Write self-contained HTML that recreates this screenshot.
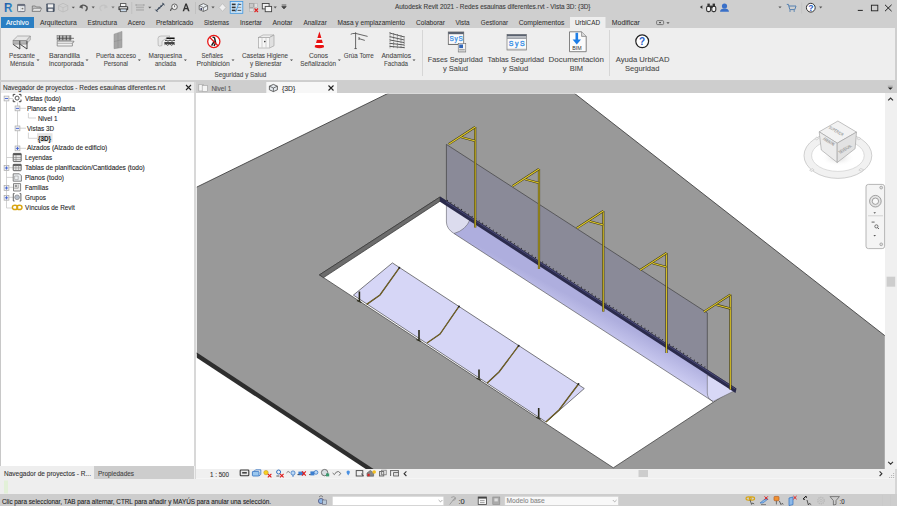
<!DOCTYPE html>
<html><head><meta charset="utf-8"><style>
html,body{margin:0;padding:0;width:897px;height:506px;overflow:hidden;background:#cfcfcf}
svg{display:block;font-family:"Liberation Sans",sans-serif}
</style></head><body>
<svg width="897" height="506" viewBox="0 0 897 506"><rect x="0" y="0" width="897" height="28" fill="#cfcfcf"/><rect x="0" y="28" width="897" height="53" fill="#eeeeee"/><rect x="0" y="28" width="1" height="53" fill="#c6c6c6"/><rect x="895" y="28" width="2" height="53" fill="#cfcfcf"/><rect x="0" y="80" width="897" height="2" fill="#cfcfcf"/><rect x="0" y="82" width="195" height="397" fill="#ffffff"/><rect x="0" y="82" width="1" height="397" fill="#c8c8c8"/><rect x="1" y="82" width="193" height="11" fill="#ececec"/><rect x="194" y="82" width="2" height="397" fill="#d8d8d8"/><rect x="0" y="466" width="195" height="13" fill="#eeeeee"/><rect x="94" y="466" width="100" height="13" fill="#cdcdcd"/><rect x="196" y="81" width="701" height="12" fill="#cecece"/><rect x="196" y="93" width="689" height="376" fill="#ffffff"/><rect x="885" y="93" width="12" height="376" fill="#f0f0f0"/><rect x="196" y="469" width="701" height="10" fill="#f0f0f0"/><rect x="196" y="478.5" width="701" height="1" fill="#fafafa"/><rect x="0" y="479" width="897" height="15" fill="#eeeeee"/><rect x="895" y="469" width="2" height="25" fill="#d6d6d6"/><rect x="0" y="494" width="897" height="12" fill="#cdcdcd"/><text x="395" y="8.7" font-size="7" fill="#3c3c3c" stroke="#3c3c3c" stroke-width="0.1" textLength="195.5" lengthAdjust="spacingAndGlyphs">Autodesk Revit 2021 - Redes esauinas diferentes.rvt - Vista 3D: {3D}</text><rect x="1" y="17" width="33" height="11" fill="#2b7fc3"/><text x="6" y="24.7" font-size="7" fill="#ffffff" stroke="#ffffff" stroke-width="0.1" textLength="22.8" lengthAdjust="spacingAndGlyphs">Archivo</text><rect x="570" y="17" width="35.5" height="11" fill="#eeeeee"/><text x="40" y="24.7" font-size="7" fill="#333333" stroke="#333333" stroke-width="0.06" textLength="36.8" lengthAdjust="spacingAndGlyphs">Arquitectura</text><text x="87.6" y="24.7" font-size="7" fill="#333333" stroke="#333333" stroke-width="0.06" textLength="29.4" lengthAdjust="spacingAndGlyphs">Estructura</text><text x="127.8" y="24.7" font-size="7" fill="#333333" stroke="#333333" stroke-width="0.06" textLength="17" lengthAdjust="spacingAndGlyphs">Acero</text><text x="155.9" y="24.7" font-size="7" fill="#333333" stroke="#333333" stroke-width="0.06" textLength="37.4" lengthAdjust="spacingAndGlyphs">Prefabricado</text><text x="204" y="24.7" font-size="7" fill="#333333" stroke="#333333" stroke-width="0.06" textLength="25" lengthAdjust="spacingAndGlyphs">Sistemas</text><text x="240" y="24.7" font-size="7" fill="#333333" stroke="#333333" stroke-width="0.06" textLength="22" lengthAdjust="spacingAndGlyphs">Insertar</text><text x="272.6" y="24.7" font-size="7" fill="#333333" stroke="#333333" stroke-width="0.06" textLength="20" lengthAdjust="spacingAndGlyphs">Anotar</text><text x="303.4" y="24.7" font-size="7" fill="#333333" stroke="#333333" stroke-width="0.06" textLength="23.4" lengthAdjust="spacingAndGlyphs">Analizar</text><text x="337.5" y="24.7" font-size="7" fill="#333333" stroke="#333333" stroke-width="0.06" textLength="67.5" lengthAdjust="spacingAndGlyphs">Masa y emplazamiento</text><text x="416" y="24.7" font-size="7" fill="#333333" stroke="#333333" stroke-width="0.06" textLength="29" lengthAdjust="spacingAndGlyphs">Colaborar</text><text x="455.5" y="24.7" font-size="7" fill="#333333" stroke="#333333" stroke-width="0.06" textLength="14" lengthAdjust="spacingAndGlyphs">Vista</text><text x="480.8" y="24.7" font-size="7" fill="#333333" stroke="#333333" stroke-width="0.06" textLength="27.2" lengthAdjust="spacingAndGlyphs">Gestionar</text><text x="518.7" y="24.7" font-size="7" fill="#333333" stroke="#333333" stroke-width="0.06" textLength="45.7" lengthAdjust="spacingAndGlyphs">Complementos</text><text x="575" y="24.7" font-size="7" fill="#333333" stroke="#333333" stroke-width="0.06" textLength="25" lengthAdjust="spacingAndGlyphs">UrbiCAD</text><text x="611.8" y="24.7" font-size="7" fill="#333333" stroke="#333333" stroke-width="0.06" textLength="28" lengthAdjust="spacingAndGlyphs">Modificar</text><text x="9" y="57.5" font-size="6.8" fill="#484848" stroke="#484848" stroke-width="0.08" textLength="26" lengthAdjust="spacingAndGlyphs">Pescante</text><text x="10" y="65.6" font-size="6.8" fill="#484848" stroke="#484848" stroke-width="0.08" textLength="24" lengthAdjust="spacingAndGlyphs">Ménsula</text><text x="49" y="57.5" font-size="6.8" fill="#484848" stroke="#484848" stroke-width="0.08" textLength="31" lengthAdjust="spacingAndGlyphs">Barandilla</text><text x="49" y="65.6" font-size="6.8" fill="#484848" stroke="#484848" stroke-width="0.08" textLength="35" lengthAdjust="spacingAndGlyphs">incorporada</text><text x="96" y="57.5" font-size="6.8" fill="#484848" stroke="#484848" stroke-width="0.08" textLength="40" lengthAdjust="spacingAndGlyphs">Puerta acceso</text><text x="103.7" y="65.6" font-size="6.8" fill="#484848" stroke="#484848" stroke-width="0.08" textLength="24.3" lengthAdjust="spacingAndGlyphs">Personal</text><text x="148.6" y="57.5" font-size="6.8" fill="#484848" stroke="#484848" stroke-width="0.08" textLength="33.4" lengthAdjust="spacingAndGlyphs">Marquesina</text><text x="155" y="65.6" font-size="6.8" fill="#484848" stroke="#484848" stroke-width="0.08" textLength="21" lengthAdjust="spacingAndGlyphs">anclada</text><text x="201.6" y="57.5" font-size="6.8" fill="#484848" stroke="#484848" stroke-width="0.08" textLength="21.4" lengthAdjust="spacingAndGlyphs">Señales</text><text x="196.4" y="65.6" font-size="6.8" fill="#484848" stroke="#484848" stroke-width="0.08" textLength="33.5" lengthAdjust="spacingAndGlyphs">Prohibición</text><text x="242" y="57.5" font-size="6.8" fill="#484848" stroke="#484848" stroke-width="0.08" textLength="46" lengthAdjust="spacingAndGlyphs">Casetas Higiene</text><text x="250" y="65.6" font-size="6.8" fill="#484848" stroke="#484848" stroke-width="0.08" textLength="31.7" lengthAdjust="spacingAndGlyphs">y Bienestar</text><text x="309" y="57.5" font-size="6.8" fill="#484848" stroke="#484848" stroke-width="0.08" textLength="19" lengthAdjust="spacingAndGlyphs">Conos</text><text x="300.3" y="65.6" font-size="6.8" fill="#484848" stroke="#484848" stroke-width="0.08" textLength="35.7" lengthAdjust="spacingAndGlyphs">Señalización</text><text x="343.8" y="57.5" font-size="6.8" fill="#484848" stroke="#484848" stroke-width="0.08" textLength="29.9" lengthAdjust="spacingAndGlyphs">Grúa Torre</text><text x="381.4" y="57.5" font-size="6.8" fill="#484848" stroke="#484848" stroke-width="0.08" textLength="29.6" lengthAdjust="spacingAndGlyphs">Andamios</text><text x="384" y="65.6" font-size="6.8" fill="#484848" stroke="#484848" stroke-width="0.08" textLength="24" lengthAdjust="spacingAndGlyphs">Fachada</text><text x="214.5" y="76.8" font-size="6.8" fill="#484848" stroke="#484848" stroke-width="0.08" textLength="51.8" lengthAdjust="spacingAndGlyphs">Seguridad y Salud</text><path d="M36.5 59.5h3l-1.5 1.6z" fill="#444"/><path d="M85.5 59.5h3l-1.5 1.6z" fill="#444"/><path d="M137.8 59.5h3l-1.5 1.6z" fill="#444"/><path d="M183.9 59.5h3l-1.5 1.6z" fill="#444"/><path d="M231.5 59.5h3l-1.5 1.6z" fill="#444"/><path d="M290.0 59.5h3l-1.5 1.6z" fill="#444"/><path d="M337.8 59.5h3l-1.5 1.6z" fill="#444"/><path d="M412.5 59.5h3l-1.5 1.6z" fill="#444"/><text x="427.8" y="61.8" font-size="8" fill="#484848" stroke="#484848" stroke-width="0.08" textLength="55" lengthAdjust="spacingAndGlyphs">Fases Seguridad</text><text x="442.9" y="71.4" font-size="8" fill="#484848" stroke="#484848" stroke-width="0.08" textLength="25" lengthAdjust="spacingAndGlyphs">y Salud</text><text x="487.6" y="61.8" font-size="8" fill="#484848" stroke="#484848" stroke-width="0.08" textLength="56.6" lengthAdjust="spacingAndGlyphs">Tablas Seguridad</text><text x="502.7" y="71.4" font-size="8" fill="#484848" stroke="#484848" stroke-width="0.08" textLength="25.5" lengthAdjust="spacingAndGlyphs">y Salud</text><text x="548.6" y="61.8" font-size="8" fill="#484848" stroke="#484848" stroke-width="0.08" textLength="55.4" lengthAdjust="spacingAndGlyphs">Documentación</text><text x="569.7" y="71.4" font-size="8" fill="#484848" stroke="#484848" stroke-width="0.08" textLength="13.3" lengthAdjust="spacingAndGlyphs">BIM</text><text x="615.7" y="61.8" font-size="8" fill="#484848" stroke="#484848" stroke-width="0.08" textLength="53.8" lengthAdjust="spacingAndGlyphs">Ayuda UrbiCAD</text><text x="625" y="71.4" font-size="8" fill="#484848" stroke="#484848" stroke-width="0.08" textLength="34.4" lengthAdjust="spacingAndGlyphs">Seguridad</text><rect x="422" y="30" width="1" height="46" fill="#d6d6d6"/><rect x="609" y="30" width="1" height="46" fill="#d6d6d6"/><defs><linearGradient id="rg" x1="0" y1="0" x2="1" y2="1"><stop offset="0" stop-color="#1b4f9c"/><stop offset="1" stop-color="#3aa0e0"/></linearGradient></defs><text x="4" y="12" font-size="12.4" font-weight="bold" fill="url(#rg)" textLength="8.4" lengthAdjust="spacingAndGlyphs">R</text><rect x="17.5" y="4.4" width="7.4" height="7.2" rx="0.8" fill="#d8dce0" stroke="#5a6070" stroke-width="0.8"/><rect x="17.5" y="4.4" width="7.4" height="1.4" fill="#5a6070"/><rect x="18.8" y="6.6" width="1.4" height="4.2" fill="#f4f4f4"/><rect x="21" y="7" width="3.2" height="3.8" fill="#f4f4f4"/><rect x="21.6" y="7.8" width="1.8" height="1.6" fill="#777"/><path d="M32.3 6 h3 l1 1 h4 v4.3 h-8 z" fill="#c8c8c8" stroke="#666" stroke-width="0.7"/><path d="M33.5 8.3 h8.2 l-1.6 3 h-8 z" fill="#e4e4e4" stroke="#777" stroke-width="0.7"/><rect x="46.3" y="3.5" width="8.4" height="8.4" rx="0.8" fill="#4a5566"/><rect x="47.8" y="4.3" width="5.4" height="3.2" fill="#f2f2f2"/><rect x="48.2" y="8.7" width="4.6" height="2.6" fill="#e8e8e8"/><path d="M63 3.3 L67.8 5.6 V10 L63 12 L58.6 10 V5.6 Z" fill="#cfcfcf" stroke="#b4b4b4" stroke-width="0.6"/><path d="M58.6 5.6 L63 7.7 L67.8 5.6 M63 7.7 V12" stroke="#bbb" stroke-width="0.6" fill="none"/><path d="M71.7 6.8h3.2l-1.6 1.8z" fill="#555"/><path d="M80 6.5 Q84 3.5 87 7 Q87.6 9.5 85.5 10.8" stroke="#555" stroke-width="1.4" fill="none"/><path d="M79 7.2 L82.5 4.2 L82.8 8.8 Z" fill="#555"/><path d="M91.60000000000001 6.6000000000000005h3.2l-1.6 1.8z" fill="#555"/><path d="M107 6.5 Q103 3.5 100 7 Q99.4 9.5 101.5 10.8" stroke="#c4c4c4" stroke-width="1.2" fill="none"/><path d="M108 7.2 L104.5 4.2 L104.2 8.8 Z" fill="#c4c4c4"/><path d="M111.4 6.6000000000000005h3.2l-1.6 1.8z" fill="#777"/><rect x="120.5" y="3.6" width="5.4" height="3" fill="#f4f4f4" stroke="#444" stroke-width="0.8"/><rect x="118.4" y="6.3" width="9.8" height="4" rx="0.8" fill="#444"/><rect x="120.3" y="9" width="6" height="2.7" fill="#cde" stroke="#444" stroke-width="0.7"/><rect x="119.6" y="7.2" width="7.4" height="1.2" fill="#eee"/><rect x="131.4" y="2" width="0.8" height="12" fill="#bdbdbd"/><rect x="136" y="6.6" width="8" height="1.6" fill="#b0b0b0"/><rect x="136" y="9.2" width="8" height="1.5" fill="#b0b0b0"/><path d="M136 5 h8 M136 4 v2 M144 4 v2" stroke="#9a9a9a" stroke-width="0.7"/><path d="M148.20000000000002 6.8h3.2l-1.6 1.8z" fill="#555"/><path d="M156 11 L164 3.6" stroke="#3c4a5c" stroke-width="1.1"/><path d="M155.4 9.6 L157.6 11.8 M162.2 3 L164.6 5.1 M158.6 7.3 l1.2 1.2 M160.6 5.5 l1.2 1.2" stroke="#3c4a5c" stroke-width="1"/><circle cx="174.5" cy="6.8" r="2.8" fill="#f2f2f2" stroke="#555" stroke-width="0.9"/><path d="M174.6 5.3 V7.2" stroke="#444" stroke-width="0.8"/><path d="M170.5 11 Q171 8 172.7 8.6" stroke="#555" stroke-width="1.2" fill="none"/><path d="M182.6 11.3 L185.4 3.6 H186.8 L189.6 11.3 H188 L187.3 9.2 H184.8 L184.1 11.3 Z M185.2 7.9 H186.9 L186.05 5.2 Z" fill="#333" fill-rule="evenodd"/><rect x="195" y="2" width="0.8" height="12" fill="#bdbdbd"/><path d="M203.4 3.6 L207.6 5.6 V9.6 L203.4 11.4 L199.2 9.6 V5.6 Z" fill="#e9eef3" stroke="#555" stroke-width="0.8"/><path d="M199.2 5.6 L203.4 7.6 L207.6 5.6 M203.4 7.6 V11.4" stroke="#555" stroke-width="0.7" fill="none"/><rect x="200.5" y="8" width="1.6" height="2" fill="#446"/><path d="M211.4 6.6000000000000005h3.2l-1.6 1.8z" fill="#555"/><path d="M222.5 3.6 L226 7.5 L222.5 11.4 L219 7.5 Z" fill="#f0f0f0" stroke="#b8b8b8" stroke-width="0.8"/><rect x="230.2" y="1.5" width="12.6" height="11.8" fill="#cce4f7" stroke="#3d95e0" stroke-width="0.8"/><rect x="231.8" y="3.6" width="3.8" height="1.6" fill="#333"/><rect x="231.8" y="6.6" width="3.8" height="1.6" fill="#333"/><rect x="231.8" y="9.6" width="3.8" height="1.6" fill="#333"/><rect x="237.6" y="3.9" width="3.6" height="1" fill="#555"/><rect x="237.6" y="6.9" width="3.6" height="1" fill="#999"/><rect x="237.6" y="9.9" width="3.6" height="1" fill="#555"/><path d="M239 3 L235.6 12" stroke="#3d95e0" stroke-width="0.9"/><rect x="249.4" y="3.4" width="4.2" height="4.2" fill="#c8c8c8" stroke="#888" stroke-width="0.5"/><rect x="254.3" y="3.4" width="3.4" height="4.2" fill="#e0e0e0" stroke="#aaa" stroke-width="0.5"/><rect x="249.4" y="8.3" width="4.2" height="3.4" fill="#e0e0e0" stroke="#aaa" stroke-width="0.5"/><path d="M254.5 8.5 L258 12 M258 8.5 L254.5 12" stroke="#e02020" stroke-width="1.1"/><rect x="262.3" y="3.5" width="6.8" height="5.4" fill="#f0f0f0" stroke="#444" stroke-width="0.9"/><rect x="265.2" y="6.4" width="6.4" height="5.3" fill="#f6f6f6" stroke="#444" stroke-width="0.9"/><path d="M273.59999999999997 6.6000000000000005h3.2l-1.6 1.8z" fill="#555"/><path d="M281.7 5 h4.6 M281.8 6.6 h4.4 l-2.2 2.3 z" stroke="#444" stroke-width="0.8" fill="#444"/><path d="M702.4 5.2 V9 L699.9 7.1 Z" fill="#333"/><rect x="706.6" y="6.2" width="4" height="5.4" rx="1.6" fill="#f4f4f4" stroke="#333" stroke-width="1.1"/><rect x="711.8" y="6.2" width="4" height="5.4" rx="1.6" fill="#f4f4f4" stroke="#333" stroke-width="1.1"/><rect x="707.4" y="3.6" width="2.4" height="3.4" fill="#333"/><rect x="712.6" y="3.6" width="2.4" height="3.4" fill="#333"/><rect x="709.8" y="5.6" width="2.8" height="2.4" fill="#333"/><circle cx="724.5" cy="6" r="2.6" fill="#3a70c8"/><path d="M720 11.7 Q720.4 8.6 724.5 8.6 Q728.6 8.6 729 11.7 Z" fill="#3a70c8"/><path d="M778.4 6.5h3.2l-1.6 1.8z" fill="#555"/><path d="M786.8 4.4 h1.6 l1.4 5.2 h5 l1.2 -3.6 h-7" stroke="#5580b0" stroke-width="1" fill="none"/><circle cx="790" cy="11" r="0.8" fill="#5580b0"/><circle cx="794.2" cy="11" r="0.8" fill="#5580b0"/><rect x="801.4" y="2.5" width="0.7" height="11" fill="#c0c0c0"/><circle cx="810.8" cy="7.7" r="4.4" fill="#fff" stroke="#333" stroke-width="1"/><text x="808.2" y="10.9" font-size="8.6" font-weight="bold" fill="#2a5cc0">?</text><path d="M819.1 6.6000000000000005h3.2l-1.6 1.8z" fill="#555"/><path d="M857.8 10.4 h5" stroke="#222" stroke-width="1"/><rect x="871.4" y="5.2" width="6.4" height="5.6" fill="none" stroke="#222" stroke-width="0.9"/><path d="M885 4.8 L891.6 11.2 M891.6 4.8 L885 11.2" stroke="#222" stroke-width="1"/><rect x="656.6" y="20.6" width="7" height="4" rx="1" fill="none" stroke="#555" stroke-width="0.7"/><rect x="659" y="22" width="2" height="1.2" fill="#555"/><path d="M666.4 22.2h3.2l-1.6 1.8z" fill="#555"/><path d="M13 40.5 L17.6 36 H30.4 L26.4 40.5 Z" fill="#e6e6e6" stroke="#8a8a8a" stroke-width="0.6"/><rect x="13" y="40.5" width="13.4" height="3.6" fill="#b4b4b4" stroke="#777" stroke-width="0.5"/><path d="M26.4 40.5 L30.4 36 V39.8 L26.4 44.1 Z" fill="#d0d0d0" stroke="#888" stroke-width="0.5"/><path d="M13.2 44.4 L19.8 49 V40.8 M20.4 44.4 L27 49 V40.8" stroke="#333" stroke-width="0.9" fill="none"/><rect x="57" y="35.6" width="14" height="4.6" fill="#b8b8b8" stroke="#666" stroke-width="0.5"/><path d="M59.5 35.6 v4.6 M62.8 35.6 v4.6 M66.3 35.6 v4.6 M70 35.6 v4.6" stroke="#444" stroke-width="0.9"/><path d="M57 38.3 h17" stroke="#444" stroke-width="0.7"/><path d="M57.2 41.2 H74 L72.4 43.4 V46 H57.2 Z" fill="#f0f0f0" stroke="#777" stroke-width="0.7"/><path d="M57.2 43.3 H72.4 L74 41.2" stroke="#888" stroke-width="0.6" fill="none"/><path d="M114 34.2 L122 31.4 V47.5 L114 48.7 Z" fill="#a6a6a6" stroke="#8c8c8c" stroke-width="0.5"/><path d="M114 41.6 L122 39.6 M118 33 V48" stroke="#8a8a8a" stroke-width="0.5"/><path d="M158 38.5 Q158 36 161 36 H170 Q169 37.6 166 38.3 L162 41.3 V45.6 Q159 46.6 158.2 45.4 Z" fill="#e8e8e8" stroke="#a0a0a0" stroke-width="0.6"/><path d="M166.4 38.2 H174.6 M164.4 43 H174.6" stroke="#111" stroke-width="1.5"/><path d="M165 40.6 q1 -1.2 2 0 t2 0 t2 0 t2 0 t2 0 M164.6 44.6 q1 -1.2 2 0 t2 0 t2 0 t2 0 t2 0" stroke="#222" stroke-width="0.9" fill="none"/><circle cx="213.8" cy="41.5" r="6.1" fill="#fff" stroke="#e81818" stroke-width="1.3"/><path d="M212.5 37.4 Q214.4 36.8 214.8 38.8 L215.6 42.8 L214 46 M214.4 41 L211.6 45.6" stroke="#222" stroke-width="1.5" fill="none"/><path d="M209.6 37.3 L218 45.7" stroke="#e81818" stroke-width="1.3"/><path d="M258.6 37.4 L263 35 H274 L269.6 37.4 Z" fill="#f4f4f4" stroke="#999" stroke-width="0.6"/><rect x="258.6" y="37.4" width="11" height="10.6" fill="#f6f6f6" stroke="#999" stroke-width="0.6"/><path d="M269.6 37.4 L274 35 V45.8 L269.6 48" fill="#e0e0e0" stroke="#999" stroke-width="0.6"/><path d="M262 38 V47.5 M266 38 V47.5" stroke="#aaa" stroke-width="0.5"/><circle cx="264.8" cy="41.6" r="0.8" fill="#333"/><path d="M319.4 31.6 L317.4 38 H321.4 Z" fill="#e81212"/><path d="M317 39.4 L316 43 H322.8 L321.8 39.4 Z" fill="#e81212"/><path d="M317.4 38 L317 39.4 H321.8 L321.4 38 Z" fill="#fff"/><path d="M316 43 L315.5 45 H323.3 L322.8 43 Z" fill="#fff"/><path d="M315.6 45 Q314.6 45.6 314.8 47.2 Q319.4 49.4 324 47.2 Q324.2 45.6 323.2 45 Z" fill="#e81212"/><path d="M355.6 32.3 V48.7 M350.7 34.3 Q352 33.3 355.6 33.4 L367.6 36.4 M359 37 V40 M359 38.6 L364.8 40.4" stroke="#444" stroke-width="0.8" fill="none"/><path d="M354.4 48.6 h2.4" stroke="#444" stroke-width="0.8"/><path d="M389.6 33 L404.4 37 M389.6 36.6 L404.4 40 M389.6 40 L404.4 42.6 M389.6 43.3 L404.4 45 M389.6 46.4 L404.4 47.6" stroke="#333" stroke-width="0.8"/><path d="M390 32 V48.3 M393.6 33 V48.3 M397.4 34 V48.3 M401 35 V48.3 M404.2 36 V48.3" stroke="#555" stroke-width="0.6" stroke-dasharray="1.5 0.7"/><rect x="448.3" y="32" width="15.4" height="12.4" fill="#fafafa" stroke="#666" stroke-width="0.8"/><rect x="448.3" y="32" width="15.4" height="2.2" fill="#5a6270"/><text x="449.4" y="40.6" font-size="6.4" fill="#2f8ae6" stroke="#2f8ae6" stroke-width="0.25" textLength="13.4" lengthAdjust="spacing">SyS</text><path d="M448.3 44.4 H458" stroke="#666" stroke-width="0.6"/><rect x="458.2" y="43.6" width="7.6" height="8.4" fill="#f4f4f4" stroke="#555" stroke-width="0.5"/><rect x="459.2" y="44.5" width="3.8" height="3.6" fill="#3166b8"/><path d="M459.2 49.5 h5.6 M459.2 51 h5.6" stroke="#777" stroke-width="0.6"/><rect x="507" y="34.4" width="19.4" height="15.6" fill="#fafafa" stroke="#777" stroke-width="0.7"/><rect x="507" y="34.4" width="19.4" height="2" fill="#5a6270"/><rect x="507" y="37.4" width="19.4" height="1.4" fill="#8a9098"/><text x="508.8" y="46.4" font-size="7" fill="#2f8ae6" stroke="#2f8ae6" stroke-width="0.3" textLength="15.8" lengthAdjust="spacing">SyS</text><path d="M507 49.2 h19.4" stroke="#999" stroke-width="0.6"/><path d="M569.5 31.8 H581.6 L586.2 36.4 V51.7 H569.5 Z" fill="#fbfbfb" stroke="#666" stroke-width="0.8"/><path d="M581.6 31.8 V36.4 H586.2" fill="#ddd" stroke="#666" stroke-width="0.6"/><path d="M576.8 32.8 V40.6" stroke="#1e7ee6" stroke-width="2.6"/><path d="M572.6 39.4 H581 L576.8 44.4 Z" fill="#1e7ee6"/><text x="572.2" y="50.4" font-size="4.6" fill="#333" textLength="9.4" lengthAdjust="spacingAndGlyphs">BIM</text><circle cx="642.2" cy="41.3" r="6.4" fill="#fff" stroke="#222" stroke-width="1.2"/><text x="639.1" y="45.1" font-size="10" font-weight="bold" fill="#2a60c8">?</text><text x="3" y="90.4" font-size="7" fill="#333333" stroke="#333333" stroke-width="0.1" textLength="162" lengthAdjust="spacingAndGlyphs">Navegador de proyectos - Redes esauinas diferentes.rvt</text><path d="M186 85l5 5M191 85l-5 5" stroke="#222" stroke-width="1.1"/><rect x="37" y="133.2" width="15.5" height="9" fill="#e4e4e4"/><text x="25" y="100.9" font-size="7" fill="#1e1e1e" stroke="#1e1e1e" stroke-width="0.1" textLength="36" lengthAdjust="spacingAndGlyphs">Vistas (todo)</text><text x="27" y="110.8" font-size="7" fill="#1e1e1e" stroke="#1e1e1e" stroke-width="0.1" textLength="48" lengthAdjust="spacingAndGlyphs">Planos de planta</text><text x="38" y="120.7" font-size="7" fill="#1e1e1e" stroke="#1e1e1e" stroke-width="0.1" textLength="19.5" lengthAdjust="spacingAndGlyphs">Nivel 1</text><text x="27" y="130.6" font-size="7" fill="#1e1e1e" stroke="#1e1e1e" stroke-width="0.1" textLength="27" lengthAdjust="spacingAndGlyphs">Vistas 3D</text><text x="38" y="140.5" font-size="7" fill="#1e1e1e" stroke="#1e1e1e" stroke-width="0.1" font-weight="bold" textLength="13" lengthAdjust="spacingAndGlyphs">{3D}</text><text x="27" y="150.4" font-size="7" fill="#1e1e1e" stroke="#1e1e1e" stroke-width="0.1" textLength="80.2" lengthAdjust="spacingAndGlyphs">Alzados (Alzado de edificio)</text><text x="25" y="160.3" font-size="7" fill="#1e1e1e" stroke="#1e1e1e" stroke-width="0.1" textLength="27" lengthAdjust="spacingAndGlyphs">Leyendas</text><text x="25" y="170.2" font-size="7" fill="#1e1e1e" stroke="#1e1e1e" stroke-width="0.1" textLength="119.8" lengthAdjust="spacingAndGlyphs">Tablas de planificación/Cantidades (todo)</text><text x="25" y="180.1" font-size="7" fill="#1e1e1e" stroke="#1e1e1e" stroke-width="0.1" textLength="39" lengthAdjust="spacingAndGlyphs">Planos (todo)</text><text x="25" y="190.0" font-size="7" fill="#1e1e1e" stroke="#1e1e1e" stroke-width="0.1" textLength="23.4" lengthAdjust="spacingAndGlyphs">Familias</text><text x="25" y="199.9" font-size="7" fill="#1e1e1e" stroke="#1e1e1e" stroke-width="0.1" textLength="20.9" lengthAdjust="spacingAndGlyphs">Grupos</text><text x="25" y="209.8" font-size="7" fill="#1e1e1e" stroke="#1e1e1e" stroke-width="0.1" textLength="49.7" lengthAdjust="spacingAndGlyphs">Vínculos de Revit</text><path d="M6.5 101.2 V208 H12.5 M17.5 102.5 V148.5 M28.4 113 V118 H36 M28.4 132.6 V138.3 H37 M9 98.5 H13 M20 108.3 H26 M20 128.2 H26 M20 148.3 H26 M6.5 157.5 H13 M9 167.7 H13 M6.5 177.4 H13 M9 187.3 H13 M9 197.3 H13" stroke="#c8c8c8" stroke-width="0.8" fill="none"/><rect x="4.1" y="96.1" width="4.8" height="4.8" fill="#f0f0f4" stroke="#a8a8a8" stroke-width="0.7"/><path d="M4.8999999999999995 98.5 h3.2" stroke="#4060d0" stroke-width="0.9"/><rect x="15.1" y="106" width="4.8" height="4.8" fill="#f0f0f4" stroke="#a8a8a8" stroke-width="0.7"/><path d="M15.9 108.4 h3.2" stroke="#4060d0" stroke-width="0.9"/><rect x="15.1" y="126" width="4.8" height="4.8" fill="#f0f0f4" stroke="#a8a8a8" stroke-width="0.7"/><path d="M15.9 128.4 h3.2" stroke="#4060d0" stroke-width="0.9"/><rect x="15.1" y="146" width="4.8" height="4.8" fill="#f0f0f4" stroke="#a8a8a8" stroke-width="0.7"/><path d="M15.9 148.4 h3.2" stroke="#4060d0" stroke-width="0.9"/><path d="M17.5 146.8 v3.2" stroke="#4060d0" stroke-width="0.9"/><rect x="4.1" y="165.6" width="4.8" height="4.8" fill="#f0f0f4" stroke="#a8a8a8" stroke-width="0.7"/><path d="M4.8999999999999995 168.0 h3.2" stroke="#4060d0" stroke-width="0.9"/><path d="M6.5 166.4 v3.2" stroke="#4060d0" stroke-width="0.9"/><rect x="4.1" y="185.6" width="4.8" height="4.8" fill="#f0f0f4" stroke="#a8a8a8" stroke-width="0.7"/><path d="M4.8999999999999995 188.0 h3.2" stroke="#4060d0" stroke-width="0.9"/><path d="M6.5 186.4 v3.2" stroke="#4060d0" stroke-width="0.9"/><rect x="4.1" y="195.4" width="4.8" height="4.8" fill="#f0f0f4" stroke="#a8a8a8" stroke-width="0.7"/><path d="M4.8999999999999995 197.8 h3.2" stroke="#4060d0" stroke-width="0.9"/><path d="M6.5 196.20000000000002 v3.2" stroke="#4060d0" stroke-width="0.9"/><path d="M13.2 96.5 V94.4 H15.3 M18.9 94.4 H21 V96.5 M21 99.6 V101.7 H18.9 M15.3 101.7 H13.2 V99.6" stroke="#333" stroke-width="0.9" fill="none"/><circle cx="17.1" cy="98.1" r="2" fill="none" stroke="#555" stroke-width="1"/><rect x="13.2" y="153.4" width="8" height="8.2" rx="0.6" fill="#e8e8e8" stroke="#555" stroke-width="0.9"/><rect x="13.2" y="153.4" width="8" height="1.8" fill="#555"/><path d="M13.5 157.6 h7.5 M13.5 159.6 h7.5 M16 155 v6.5" stroke="#777" stroke-width="0.6"/><rect x="13.2" y="164.3" width="8" height="6.4" rx="0.6" fill="#e6e6e6" stroke="#555" stroke-width="0.9"/><rect x="13.2" y="164.3" width="8" height="1.6" fill="#555"/><path d="M13.5 167.9 h7.5 M15.9 165.5 v5 M18.6 165.5 v5" stroke="#888" stroke-width="0.6"/><path d="M13.2 173.8 H19.4 L21.4 175.8 V181.2 H13.2 Z" fill="#eceff2" stroke="#666" stroke-width="0.8"/><path d="M14.6 176 h3.6 v3.6 h-3.6 z" fill="none" stroke="#999" stroke-width="0.6"/><path d="M13.5 183.6 H20.6 V191 H13.5 Z" fill="#f0f0f0" stroke="#777" stroke-width="0.9"/><rect x="14.8" y="184.8" width="2.2" height="2.4" fill="#999"/><path d="M18.2 184.6 v3.6 h-4" stroke="#888" stroke-width="0.7" fill="none"/><path d="M14.6 193.6 H13.3 V201 H14.6 M19.6 193.6 H20.9 V201 H19.6" stroke="#555" stroke-width="0.9" fill="none"/><circle cx="17.1" cy="197.3" r="2.4" fill="#b8c0cc" stroke="#777" stroke-width="0.6"/><ellipse cx="15" cy="207.4" rx="2.6" ry="2.1" fill="none" stroke="#d8a410" stroke-width="1.4"/><ellipse cx="19.4" cy="207.4" rx="2.6" ry="2.1" fill="none" stroke="#d8a410" stroke-width="1.4"/><text x="4" y="476" font-size="7" fill="#333333" stroke="#333333" stroke-width="0.1" textLength="87" lengthAdjust="spacingAndGlyphs">Navegador de proyectos - R...</text><rect x="4" y="480.5" width="4" height="13" fill="#e2f0d8"/><text x="2" y="503.6" font-size="6.8" fill="#1e1e1e" stroke="#1e1e1e" stroke-width="0.1" textLength="269" lengthAdjust="spacingAndGlyphs">Clic para seleccionar, TAB para alternar, CTRL para añadir y MAYÚS para anular una selección.</text><circle cx="321" cy="501" r="2.6" fill="#8cb4e4" stroke="#336" stroke-width="0.6"/><rect x="322.6" y="500" width="4" height="4.4" fill="#b8c8d8" stroke="#556" stroke-width="0.5"/><path d="M319 497 l2 -1.4 l2 1.4" stroke="#444" stroke-width="0.6" fill="none"/><rect x="332.3" y="496.3" width="111.5" height="9" fill="#ffffff" stroke="#d0d0d0" stroke-width="0.6"/><path d="M438.6 500 l1.9 1.9 l1.9 -1.9" stroke="#888" stroke-width="0.7" fill="none"/><path d="M449.6 504.6 L455.2 497.6 M451.2 497.4 q3 -1.8 4.6 0.6 q-0.4 2.6 -3.2 2.4" stroke="#a0a0a0" stroke-width="1" fill="none"/><text x="458.4" y="503.6" font-size="6.8" fill="#333333" stroke="#333333" stroke-width="0.1" textLength="6.2" lengthAdjust="spacingAndGlyphs">:0</text><rect x="478.2" y="497" width="8.2" height="7.4" fill="#f4f4f4" stroke="#444" stroke-width="0.8"/><rect x="478.2" y="497" width="8.2" height="1.6" fill="#444"/><path d="M480 500.6 h4.6 M480 502.6 h4.6" stroke="#666" stroke-width="0.6"/><rect x="492.8" y="497" width="7" height="7.4" fill="#aaa" stroke="#888" stroke-width="0.6"/><rect x="494.4" y="498.4" width="3.4" height="3" fill="#ddd"/><rect x="504.8" y="496.3" width="113.6" height="9" fill="#f8f8f8" stroke="#cfcfcf" stroke-width="0.6"/><path d="M612.8 500 l1.9 1.9 l1.9 -1.9" stroke="#999" stroke-width="0.7" fill="none"/><text x="506.6" y="503.4" font-size="6.8" fill="#888888" stroke="#888888" stroke-width="0.1" textLength="38" lengthAdjust="spacingAndGlyphs">Modelo base</text><ellipse cx="748.6" cy="498.6" rx="2.6" ry="1.7" fill="none" stroke="#d8a410" stroke-width="1.1"/><ellipse cx="752" cy="498.6" rx="2.6" ry="1.7" fill="none" stroke="#d8a410" stroke-width="1.1"/><path d="M750 500 l1.6 4.4 l1 -1.4 l1.6 1" stroke="#333" stroke-width="0.7" fill="none"/><path d="M760 503 L765 499 H768 L763 503 Z" fill="#8cb8e8" stroke="#2d6fc0" stroke-width="0.6"/><path d="M764.6 496.4 L767.8 499.6 M767.8 496.4 L764.6 499.6" stroke="#e01818" stroke-width="1"/><path d="M761 504.6 h5" stroke="#444" stroke-width="0.6"/><rect x="774" y="496.4" width="5" height="4.4" rx="1" fill="#f09030" stroke="#b05010" stroke-width="0.6"/><path d="M776.4 500.8 v3.6" stroke="#555" stroke-width="0.8"/><path d="M779.4 501 l1.6 3.6 l1 -1.2 l1.4 0.9" stroke="#333" stroke-width="0.7" fill="none"/><path d="M789 498 L793 497 V504.6 L789 505.6 Z" fill="#8cb8e8" stroke="#2d6fc0" stroke-width="0.7"/><path d="M793.4 496 L796.6 499.2 M796.6 496 L793.4 499.2" stroke="#e01818" stroke-width="1"/><path d="M803 499 l3 -3 M803 499 l2 0.4 M806 496 l0.4 2" stroke="#222" stroke-width="1"/><path d="M807 500 l1.4 5 l1 -1.6 l1.8 1.2" stroke="#333" stroke-width="0.8" fill="none"/><circle cx="821" cy="500.6" r="3.2" fill="none" stroke="#b8b8b8" stroke-width="1.4" stroke-dasharray="1.2 0.8"/><circle cx="821" cy="500.6" r="1.3" fill="none" stroke="#b8b8b8" stroke-width="0.7"/><path d="M830 496.6 H839.4 L836 500.6 V504.4 L833.4 505 V500.6 Z" fill="none" stroke="#666" stroke-width="0.8"/><text x="839.6" y="503.6" font-size="6.8" fill="#333333" stroke="#333333" stroke-width="0.1" textLength="5" lengthAdjust="spacingAndGlyphs">:0</text><path d="M882.5 495 v11 M890.5 495 v11" stroke="#c8c8c8" stroke-width="0.6"/><text x="98" y="476" font-size="7" fill="#444444" stroke="#444444" stroke-width="0.1" textLength="36" lengthAdjust="spacingAndGlyphs">Propiedades</text><rect x="266" y="82" width="71" height="11" fill="#f7f7f7"/><text x="211.4" y="90.5" font-size="7" fill="#555555" stroke="#555555" stroke-width="0.1" textLength="20" lengthAdjust="spacingAndGlyphs">Nivel 1</text><text x="281.9" y="90.5" font-size="7" fill="#333333" stroke="#333333" stroke-width="0.1" textLength="13.3" lengthAdjust="spacingAndGlyphs">{3D}</text><path d="M328.5 85.5l5 5M333.5 85.5l-5 5" stroke="#222" stroke-width="1.1"/><rect x="198.8" y="84.4" width="4.4" height="6.6" fill="#f4f4f4" stroke="#a0a0a0" stroke-width="0.6"/><rect x="202.2" y="85.4" width="5.2" height="6.2" fill="#f4f4f4" stroke="#a0a0a0" stroke-width="0.6"/><path d="M273.4 84.4 L277.4 86.2 V89.8 L273.4 91.6 L269.4 89.8 V86.2 Z" fill="#e6ebf0" stroke="#444" stroke-width="0.8"/><path d="M269.4 86.2 L273.4 88 L277.4 86.2 M273.4 88 V91.6" stroke="#444" stroke-width="0.7" fill="none"/><rect x="266" y="82" width="0.8" height="11" fill="#e8e8e8"/><path d="M887.8 86.2 h5" stroke="#888" stroke-width="0.6"/><path d="M887.8 87.6 h5 l-2.5 2.2 z" fill="#222"/><path d="M888.2 100.4 L890.6 98 L893 100.4" stroke="#333" stroke-width="1.2" fill="none"/><path d="M888.2 461.8 L890.6 464.2 L893 461.8" stroke="#333" stroke-width="1.1" fill="none"/><rect x="886.6" y="276.7" width="8.6" height="10" fill="#cdcdcd"/><rect x="638.5" y="470" width="9.5" height="7" fill="#cdcdcd"/><path d="M879.6 471.4 L881.9 473.7 L879.6 476" stroke="#333" stroke-width="1.1" fill="none"/><path d="M406.4 471.4 L404.1 473.7 L406.4 476" stroke="#333" stroke-width="1.1" fill="none"/><text x="210" y="476.6" font-size="6.6" fill="#333333" stroke="#333333" stroke-width="0.1" textLength="19" lengthAdjust="spacingAndGlyphs">1 : 500</text><rect x="240.2" y="470" width="8.6" height="5.8" rx="0.8" fill="#e8e8e8" stroke="#3a3a3a" stroke-width="1.1"/><rect x="242.2" y="472" width="4.6" height="1.6" fill="#444"/><rect x="252.4" y="471.4" width="6.6" height="4.6" rx="0.6" fill="#9cc8ef" stroke="#2d6fc0" stroke-width="0.8"/><path d="M254 471.4 L255.6 469.8 H260.8 V474.4 L259 476" fill="none" stroke="#2d6fc0" stroke-width="0.8"/><circle cx="266" cy="472.6" r="2.2" fill="#f6d020" stroke="#c09010" stroke-width="0.5"/><path d="M267.8 473.8 L271.4 477.4 M271.4 473.8 L267.8 477.4" stroke="#e01818" stroke-width="1.1"/><circle cx="278.6" cy="472" r="2" fill="none" stroke="#2d6fc0" stroke-width="1"/><path d="M276.4 476 h3" stroke="#333" stroke-width="0.8"/><path d="M280 473.8 L283.6 477.4 M283.6 473.8 L280 477.4" stroke="#e01818" stroke-width="1.1"/><path d="M286.4 473 Q288 470 290 472.6" stroke="#666" stroke-width="0.8" fill="none"/><circle cx="293" cy="473" r="2.1" fill="#bcd8f4" stroke="#2d6fc0" stroke-width="0.7"/><path d="M293 475 v2" stroke="#2d6fc0" stroke-width="0.8"/><rect x="298.4" y="471.6" width="5" height="3.6" fill="#3d7fd0"/><path d="M297.4 474.6 h2" stroke="#333" stroke-width="0.8"/><path d="M302 471.4 L305.8 475.6 M305.8 471.4 L302 475.6" stroke="#e01818" stroke-width="1.1"/><rect x="310.4" y="471.4" width="4" height="4" fill="#3d7fd0"/><circle cx="316" cy="472.4" r="1.9" fill="#bcd8f4" stroke="#2d6fc0" stroke-width="0.7"/><path d="M309 474.6 h1.6" stroke="#333" stroke-width="0.8"/><circle cx="324.6" cy="472.6" r="3.2" fill="#d8dde2" stroke="#555" stroke-width="0.8"/><rect x="326" y="473.4" width="3.2" height="3" fill="#3a9a70"/><path d="M332.6 473 L334.4 474.6 L336.4 472 Q338.4 470.4 340.8 473.4 L339 475.6" stroke="#555" stroke-width="0.8" fill="none"/><path d="M348.2 470.4 a1.7 1.7 0 0 1 1.7 1.7 q0 1.2 -1.7 3.4 q-1.7 -2.2 -1.7 -3.4 a1.7 1.7 0 0 1 1.7 -1.7z" fill="#4a90e2"/><rect x="356.2" y="470.6" width="6.6" height="5.4" fill="#f0f0f0" stroke="#444" stroke-width="0.9"/><path d="M361 473.6 l3 2.6" stroke="#444" stroke-width="0.8"/><path d="M367 473 L370.4 470.4 L373.6 473 V476.2 H367 Z" fill="#888" stroke="#555" stroke-width="0.6"/><rect x="367.6" y="473.8" width="2" height="2.4" fill="#e02020"/><circle cx="374.2" cy="472" r="1.8" fill="#f4c020"/><rect x="379.4" y="471.6" width="4.4" height="4.4" fill="#ddd" stroke="#555" stroke-width="0.8"/><rect x="381.6" y="470.2" width="4.6" height="4.6" fill="none" stroke="#777" stroke-width="0.8"/><path d="M390.2 470.6 h8.4 M390.6 470.4 v5.6 M398.4 470.4 v2" stroke="#555" stroke-width="0.9"/><rect x="393.6" y="472.6" width="5" height="3.4" fill="#ddd" stroke="#555" stroke-width="0.8"/><path d="M893.6 473 v1 M891.6 475 v1 M893.6 475 v1 M889.6 477 v1 M891.6 477 v1 M893.6 477 v1" stroke="#aaa" stroke-width="0.9"/><defs><clipPath id="vp"><rect x="196.8" y="93.8" width="688" height="375.2"/></clipPath></defs><g clip-path="url(#vp)"><path d="M190 190.4 L389.2 92.8 L573.8 92.8 L890 339.7 L890 470 L373 470 L190 349.3 Z" fill="#999999" stroke="#333" stroke-width="0.8"/><path d="M190 350.6 L373 471.2" stroke="#2e2e2e" stroke-width="4.3"/><path d="M319.4 274.9 L440 197 L735 388 L613.3 467.8 Z" fill="#ffffff" stroke="#333" stroke-width="0.7"/><path d="M319.4 274.9 L440 197 L440 201.2 L323.6 277.6 Z" fill="#6c6c6c" stroke="#333" stroke-width="0.7"/><defs><linearGradient id="lav" gradientUnits="userSpaceOnUse" x1="560" y1="290" x2="548" y2="312"><stop offset="0" stop-color="#aeaede"/><stop offset="1" stop-color="#d0d0f4"/></linearGradient></defs><path d="M446.4 204 L735 390.7 L735 388 L713 401.5 Q707.5 399 707.3 393 L707.3 376 L707.3 393 Q707.5 399 713 401.5 L454 233.5 Q446.6 229 446.4 222 Z" fill="url(#lav)"/><path d="M446.4 204 L470 219.5 Q466 230 454 233.5 Q446.6 229 446.4 222 Z" fill="#dcdcee" stroke="#555" stroke-width="0.5"/><path d="M707.3 375 L735 390.5 L713 401.5 Q707.5 399 707.3 393 Z" fill="#d8d8f6" stroke="#555" stroke-width="0.5"/><path d="M454 233.5 L713 401.5" stroke="#444" stroke-width="0.6"/><path d="M446.4 144.4 L707.3 312.9 L707.3 373 L446.4 201 Z" fill="#8a8a98" stroke="#333" stroke-width="0.6"/><path d="M440 196.6 L736.5 388.4 L735.5 393 L440 201.8 Z" fill="#2b2b4c"/><path d="M446 201.8 L735 388.8" stroke="#55558a" stroke-width="0.7"/><path d="M447 200.2 L707 368.4" stroke="#222" stroke-width="1.1" stroke-dasharray="1 3.2"/><path d="M475.2 127 V227.5" stroke="#403a14" stroke-width="2.2"/><path d="M475.2 127 V227.5" stroke="#d2bc26" stroke-width="1.05"/><path d="M475.2 127 L448.7 144.2 M461.4 137.3 L475.2 141" stroke="#403a14" stroke-width="2.2" fill="none"/><path d="M475.2 127 L448.7 144.2 M461.4 137.3 L475.2 141" stroke="#e0ca2a" stroke-width="1.05" fill="none"/><path d="M539 169 V269" stroke="#403a14" stroke-width="2.2"/><path d="M539 169 V269" stroke="#d2bc26" stroke-width="1.05"/><path d="M539 169 L512.5 186.2 M525.2 179.3 L539 183" stroke="#403a14" stroke-width="2.2" fill="none"/><path d="M539 169 L512.5 186.2 M525.2 179.3 L539 183" stroke="#e0ca2a" stroke-width="1.05" fill="none"/><path d="M603.3 211 V311.6" stroke="#403a14" stroke-width="2.2"/><path d="M603.3 211 V311.6" stroke="#d2bc26" stroke-width="1.05"/><path d="M603.3 211 L576.8 228.2 M589.5 221.3 L603.3 225" stroke="#403a14" stroke-width="2.2" fill="none"/><path d="M603.3 211 L576.8 228.2 M589.5 221.3 L603.3 225" stroke="#e0ca2a" stroke-width="1.05" fill="none"/><path d="M666.5 253 V353" stroke="#403a14" stroke-width="2.2"/><path d="M666.5 253 V353" stroke="#d2bc26" stroke-width="1.05"/><path d="M666.5 253 L640.0 270.2 M652.7 263.3 L666.5 267" stroke="#403a14" stroke-width="2.2" fill="none"/><path d="M666.5 253 L640.0 270.2 M652.7 263.3 L666.5 267" stroke="#e0ca2a" stroke-width="1.05" fill="none"/><path d="M730.4 294.6 V389.5" stroke="#403a14" stroke-width="2.2"/><path d="M730.4 294.6 V389.5" stroke="#d2bc26" stroke-width="1.05"/><path d="M730.4 294.6 L703.9 311.8 M716.6 304.90000000000003 L730.4 308.6" stroke="#403a14" stroke-width="2.2" fill="none"/><path d="M730.4 294.6 L703.9 311.8 M716.6 304.90000000000003 L730.4 308.6" stroke="#e0ca2a" stroke-width="1.05" fill="none"/><path d="M392.4 262.9 L584.3 388.5 L546 422 L353.4 295.1 Z" fill="#d6d6f6" stroke="#2a2a2a" stroke-width="0.6"/><path d="M399.3 267.8 L380 295 L366.7 304.4" stroke="#4a3e18" stroke-width="1.3" fill="none"/><path d="M399.3 267.8 L380 295 L366.7 304.4" stroke="#a08a30" stroke-width="0.5" fill="none"/><circle cx="399.3" cy="267.8" r="1" fill="#222"/><path d="M459 306.4 L440 334 L427 343" stroke="#4a3e18" stroke-width="1.3" fill="none"/><path d="M459 306.4 L440 334 L427 343" stroke="#a08a30" stroke-width="0.5" fill="none"/><circle cx="459" cy="306.4" r="1" fill="#222"/><path d="M518.7 345.7 L499 372 L487.2 383" stroke="#4a3e18" stroke-width="1.3" fill="none"/><path d="M518.7 345.7 L499 372 L487.2 383" stroke="#a08a30" stroke-width="0.5" fill="none"/><circle cx="518.7" cy="345.7" r="1" fill="#222"/><path d="M578.5 384 L559 410 L545.9 422" stroke="#4a3e18" stroke-width="1.3" fill="none"/><path d="M578.5 384 L559 410 L545.9 422" stroke="#a08a30" stroke-width="0.5" fill="none"/><circle cx="578.5" cy="384" r="1" fill="#222"/><path d="M359.4 291.5 V301" stroke="#2a2a1a" stroke-width="1.6"/><path d="M356.9 300.5 L361.4 302.5" stroke="#2a2a1a" stroke-width="1.2"/><path d="M419 330 V340" stroke="#2a2a1a" stroke-width="1.6"/><path d="M416.5 339.5 L421 341.5" stroke="#2a2a1a" stroke-width="1.2"/><path d="M479 369.6 V378.7" stroke="#2a2a1a" stroke-width="1.6"/><path d="M476.5 378.2 L481 380.2" stroke="#2a2a1a" stroke-width="1.2"/><path d="M538.7 408 V417.8" stroke="#2a2a1a" stroke-width="1.6"/><path d="M536.2 417.3 L540.7 419.3" stroke="#2a2a1a" stroke-width="1.2"/></g><defs><radialGradient id="sh" cx="0.5" cy="0.5" r="0.5"><stop offset="0" stop-color="#d6d6d6"/><stop offset="1" stop-color="#ffffff" stop-opacity="0"/></radialGradient></defs><path d="M804 155.6 a33.9 22.8 0 1 0 67.8 0 a33.9 22.8 0 1 0 -67.8 0 Z M811.6 155.6 a26.3 15.8 0 1 0 52.6 0 a26.3 15.8 0 1 0 -52.6 0 Z" fill="#f1f1f1" fill-rule="evenodd"/><ellipse cx="837.9" cy="155.6" rx="33.9" ry="22.8" fill="none" stroke="#bdbdbd" stroke-width="0.7"/><ellipse cx="837.9" cy="155.6" rx="26.3" ry="15.8" fill="none" stroke="#c8c8c8" stroke-width="0.6"/><ellipse cx="838" cy="158" rx="17" ry="8" fill="url(#sh)"/><path d="M837.9 121 L856.5 132.1 L837.2 143.2 L819.2 131.8 Z" fill="#f2f2f2" stroke="#9a9a9a" stroke-width="0.6"/><path d="M819.2 131.8 L837.2 143.2 V162.5 L821.3 150 Z" fill="#ececec" stroke="#9a9a9a" stroke-width="0.6"/><path d="M856.5 132.1 L837.2 143.2 V162.5 L855.1 148.7 Z" fill="#e2e2e2" stroke="#9a9a9a" stroke-width="0.6"/><text x="0" y="0" font-size="4.4" fill="#7a7a7a" transform="translate(828.6 128.2) rotate(31)" textLength="16" lengthAdjust="spacingAndGlyphs">SUPERIOR</text><text x="0" y="0" font-size="4.4" fill="#7a7a7a" transform="translate(822.4 139.6) rotate(30) skewX(-20)" textLength="13" lengthAdjust="spacingAndGlyphs">FRONTAL</text><text x="0" y="0" font-size="4.4" fill="#7a7a7a" transform="translate(840.6 153.4) rotate(-30) skewX(20)" textLength="13.4" lengthAdjust="spacingAndGlyphs">DERECHA</text><path d="M815 138.5 l2 -1.6 l1.6 1.6 l-2 1.6 z M858.6 137 l2 1.2 l-1.6 1.8 l-2 -1.2 z M809.6 170 l3 -1.5 l1.5 1.6 l-3 1.5 z M860.6 168.4 l3 1.3 l-1.8 1.7 l-3 -1.3 z" fill="#eee" stroke="#bbb" stroke-width="0.5"/><rect x="866" y="184.4" width="18.6" height="64.2" rx="2.4" fill="#f4f4f4" stroke="#a4a4a4" stroke-width="0.8"/><circle cx="881.2" cy="187.6" r="1.4" fill="#ddd" stroke="#888" stroke-width="0.6"/><circle cx="881.2" cy="244.3" r="1.4" fill="#ddd" stroke="#888" stroke-width="0.6"/><circle cx="875.4" cy="201.2" r="5.8" fill="#e4e4e4" stroke="#8a8a8a" stroke-width="0.8"/><circle cx="875.4" cy="201.2" r="3.2" fill="#f8f8f8" stroke="#8a8a8a" stroke-width="0.8"/><path d="M873.4 212.2 h2.6 l-1.3 1.5 z M873.4 234.9 h2.6 l-1.3 1.5 z" fill="#555"/><path d="M868 215.8 h15" stroke="#c4c4c4" stroke-width="0.7"/><path d="M871.6 222.1 h3" stroke="#555" stroke-width="0.9"/><circle cx="876.4" cy="226.4" r="1.6" fill="none" stroke="#555" stroke-width="0.8"/><path d="M877.5 227.6 l1.4 1.4" stroke="#555" stroke-width="1"/></svg>
</body></html>
